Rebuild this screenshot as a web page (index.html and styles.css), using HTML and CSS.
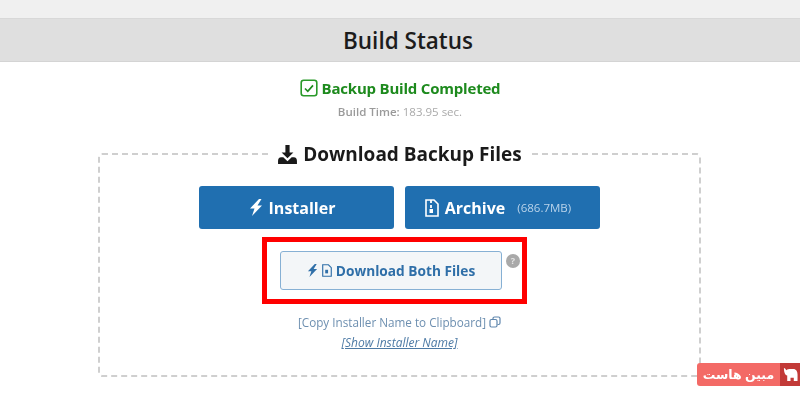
FILE: index.html
```html
<!DOCTYPE html>
<html lang="en">
<head>
<meta charset="utf-8">
<title>Build Status</title>
<link rel="stylesheet" href="styles.css">
</head>
<body>
<div class="page">
  <div class="topbar"></div>
  <header class="header"><h1>Build Status</h1></header>
  <section class="status">
    <div class="status-title">
      <svg class="check" viewBox="0 0 18 18" width="18" height="18"><rect x="1.2" y="1.2" width="15.6" height="15.6" rx="2.5" fill="none" stroke="#2a9a2a" stroke-width="1.6"/><path d="M5 9.5l2.8 2.8L13 6.4" fill="none" stroke="#1d8a1d" stroke-width="1.7"/></svg>
      <span>Backup Build Completed</span>
    </div>
    <div class="build-time"><b>Build Time:</b> 183.95 sec.</div>
  </section>
  <fieldset class="files">
    <legend class="legend">
      <svg viewBox="0 0 20 20" width="21" height="21"><path d="M8 1h4v7h3.6L10 13.6 4.400 8H8z" fill="#1a1a1a"/><path d="M1 16c0-2 1-3.500 3-3.500h2L10 16.500 14 12.500h2c2 0 3 1.500 3 3.500v3H1z" fill="#1a1a1a"/></svg>
      <span>Download Backup Files</span>
    </legend>
    <div class="btn-row">
      <a class="btn">
        <svg viewBox="0 0 14 17" width="14" height="17"><path d="M10 0L1 9.500h4.500L3 17l10-10.500H8.500L12.500 0z" fill="#fff"/></svg>
        <span>Installer</span>
      </a>
      <a class="btn">
        <svg viewBox="0 0 14 18" width="14" height="18"><path d="M1 1h8l4 4v12H1z" fill="none" stroke="#fff" stroke-width="1.600"/><path d="M6 1v3M6 6v3" stroke="#fff" stroke-width="1.800" fill="none"/><rect x="4.500" y="10" width="3.500" height="4" fill="#fff"/></svg>
        <span>Archive</span>
        <small>(686.7MB)</small>
      </a>
    </div>
    <div class="both-wrap">
      <a class="btn-both">
        <svg class="both-bolt" viewBox="0 0 14 17" width="11" height="13"><path d="M10 0L1 9.500h4.500L3 17l10-10.500H8.500L12.500 0z" fill="#2f6fa8"/></svg>
        <svg viewBox="0 0 14 18" width="10" height="13"><path d="M1 1h8l4 4v12H1z" fill="none" stroke="#2f6fa8" stroke-width="1.600"/><rect x="4.500" y="8" width="4" height="5" fill="#2f6fa8"/></svg>
        <span>Download Both Files</span>
      </a>
      <span class="help">?</span>
    </div>
    <div class="copy">[Copy Installer Name to Clipboard]
      <svg viewBox="0 0 12 12" width="12" height="12"><rect x="1" y="3.500" width="7" height="7.500" rx="1.500" fill="none" stroke="#5f86ad" stroke-width="1.200"/><path d="M4 3V2.500A1.500 1.500 0 0 1 5.500 1H9.500A1.500 1.500 0 0 1 11 2.500V7A1.500 1.500 0 0 1 9.500 8.500H8.500" fill="none" stroke="#5f86ad" stroke-width="1.200"/></svg>
    </div>
    <div class="show">[Show Installer Name]</div>
  </fieldset>
  <div class="badge">
    <span class="badge-text">مبین هاست</span>
    <span class="badge-icon">
      <svg viewBox="0 0 16 18" width="15" height="17"><path d="M1 2c1 0 2 1 2.500 2.500C5 3 6 3 8 3h3c3 0 4.500 2.500 4.500 6v7h-4v-3.500H8V16H4.500V10C2 9.500 1 6 1 2z" fill="#fff"/></svg>
    </span>
  </div>
</div>
</body>
</html>
```

FILE: styles.css
```css
* { box-sizing: border-box; }
html, body { margin: 0; height: 100%; }
body { background: #fff; font-family: "Open Sans", sans-serif; overflow: hidden; }
.page { position: relative; width: 800px; height: 400px; filter: blur(0.6px); display: flex; flex-direction: column; align-items: center; }
.topbar { width: 100%; height: 18px; background: #f0f0f0; }
.header { width: 100%; height: 44px; padding: 2px 0 0 16px; background: #dfdfdf; border-top: 1px solid #d8d8d8; border-bottom: 1px solid #d4d4d4; display: flex; align-items: center; justify-content: center; }
.header h1 { margin: 0; font-size: 22.500px; line-height: 1; font-weight: 600; color: #1c1c1c; }
.status { display: flex; flex-direction: column; align-items: center; padding-top: 15px; }
.status-title { display: flex; align-items: center; gap: 4px; height: 22px; font-size: 15px; font-weight: 700; color: #1d8a1d; letter-spacing: -0.200px; }
.build-time { margin-top: 6px; font-size: 11.500px; line-height: 14px; color: #aaa; }
.build-time b { font-weight: 600; color: #9a9a9a; }
.files { align-self: flex-start; width: 603px; height: 236px; margin: 22px 0 0 98px; padding: 0; border: 2px dashed #cfcfcf; border-radius: 4px; display: flex; flex-direction: column; align-items: center; }
.legend { display: flex; align-items: center; gap: 5px; margin: 0 auto; padding: 0 8px; font-size: 19px; line-height: 26px; font-weight: 700; color: #1a1a1a; }
.btn-row { display: flex; gap: 11px; margin-top: 19px; }
.btn { width: 195px; height: 43px; padding-right: 9px; background: #206fb0; border-radius: 3px; display: flex; align-items: center; justify-content: center; gap: 6px; color: #fff; font-size: 16px; font-weight: 700; }
.btn small { margin-left: 6px; font-size: 11.500px; font-weight: 400; color: #b9d3ea; }
.both-wrap { width: 265px; height: 67px; margin: 8px 10px 0 0; border: 5px solid #f00; display: flex; align-items: center; padding-left: 13px; }
.btn-both { width: 222px; height: 39px; background: #f3f6f8; border: 1px solid #86b0d4; border-radius: 3px; display: flex; align-items: center; justify-content: center; gap: 4px; color: #2f6fa8; font-size: 13.700px; font-weight: 700; }
.help { width: 14px; height: 14px; margin: -19px 0 0 4px; border-radius: 50%; background: #a9a9a9; color: #e4e4e4; font-size: 9px; line-height: 14px; font-weight: 700; text-align: center; }
.copy { margin-top: 10px; font-size: 11.700px; line-height: 16px; color: #6d8fb0; display: flex; align-items: center; gap: 3px; }
.show { margin-top: 5px; font-size: 12px; line-height: 16px; font-style: italic; color: #4d7aa5; text-decoration: underline; }
.badge { position: absolute; left: 697px; top: 363px; width: 103px; height: 23px; display: flex; background: #f36a66; border-radius: 3px 0 0 3px; overflow: hidden; }
.badge-text { flex: 1; text-align: center; color: #fff; font-family: "Noto Sans", "DejaVu Sans", sans-serif; font-size: 12.500px; line-height: 23px; font-weight: 700; }
.badge-icon { width: 20px; background: #c23a38; display: flex; align-items: center; justify-content: center; }
```
